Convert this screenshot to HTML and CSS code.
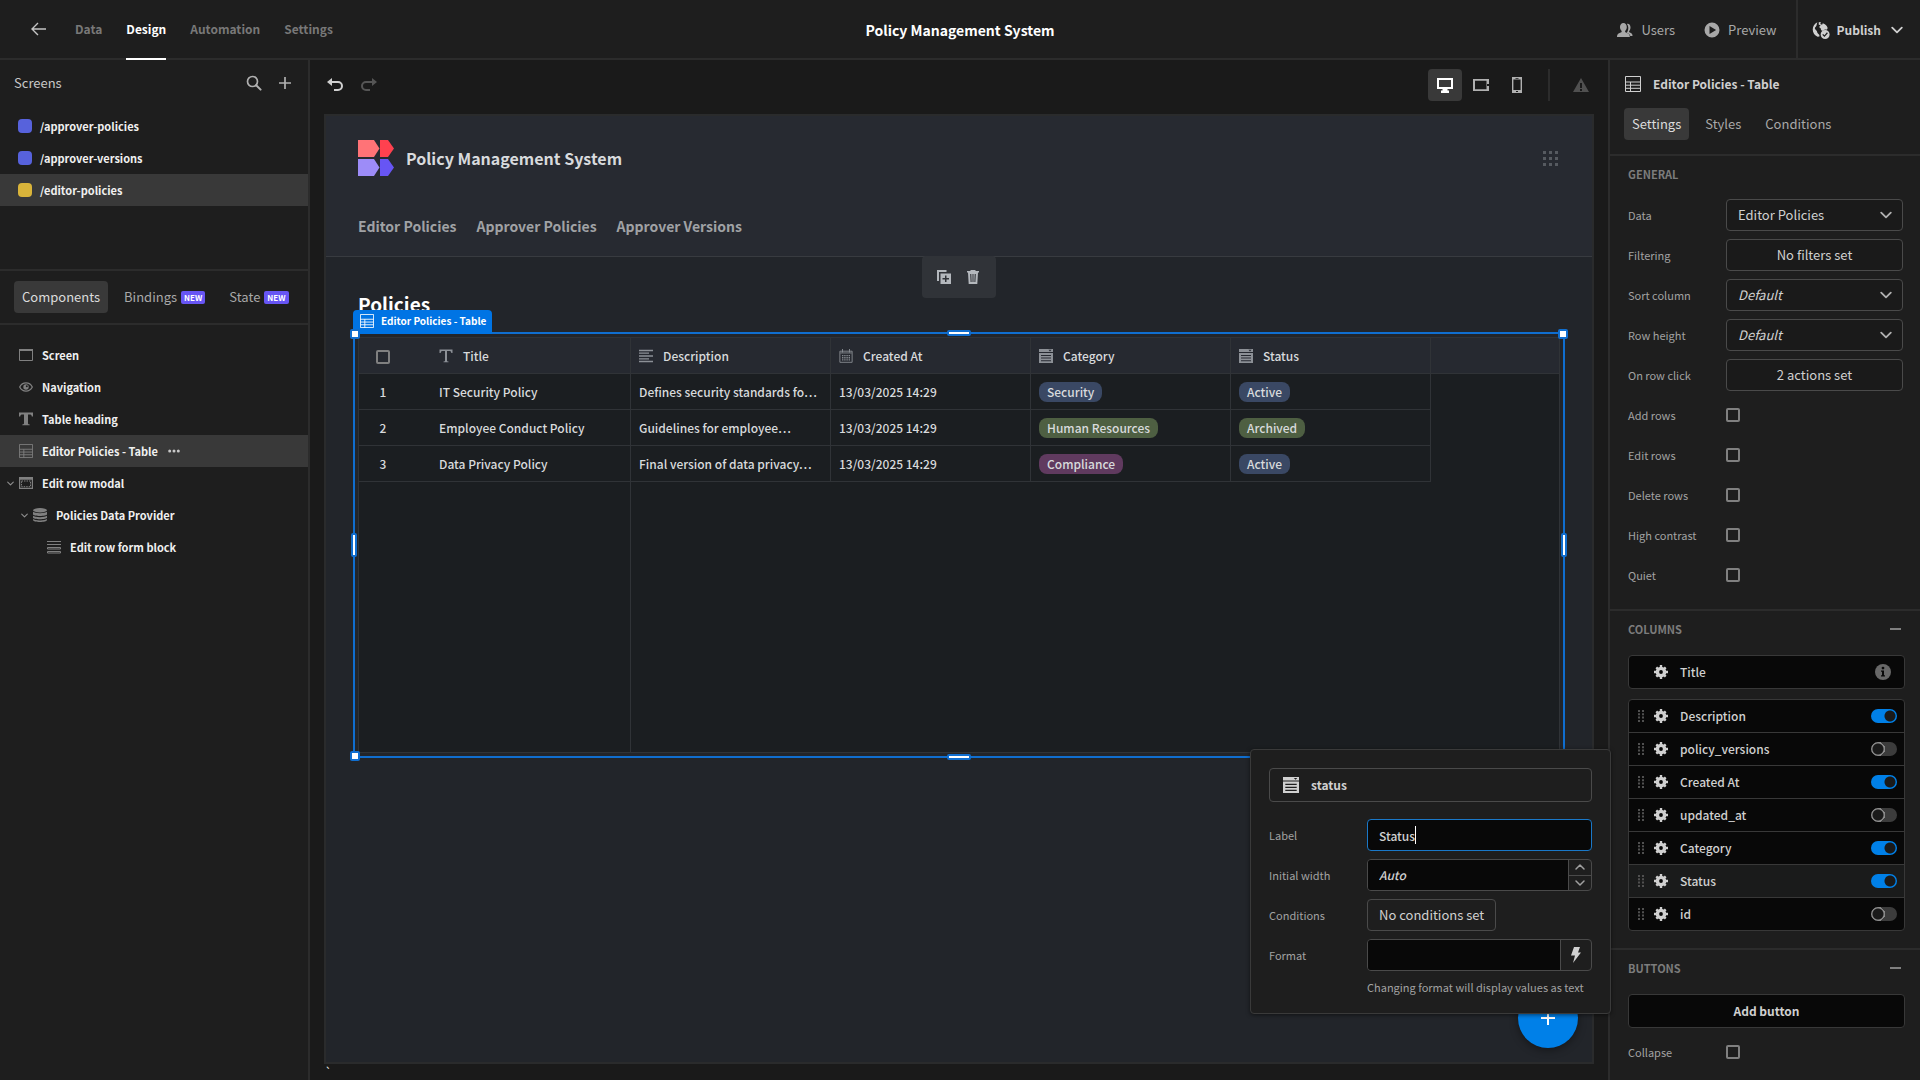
FILE: index.html
```html
<!DOCTYPE html>
<html lang="en">
<head>
  <meta charset="UTF-8" />
  <meta name="viewport" content="width=device-width, initial-scale=1.0"/>
  <title>Policy Management System</title>
  <link rel="stylesheet" href="styles.css">
</head>
<body>
  <svg class="sprite" aria-hidden="true">
    <symbol id="i-back" viewBox="0 0 18 18"><path d="M16 9H2M8 3L2 9l6 6" fill="none" stroke="currentColor" stroke-width="1.4"/></symbol>
    <symbol id="i-users" viewBox="0 0 18 18"><path d="M16.5 15h-2.2c-.5-1.600-1.800-2.600-3.500-3.200.9-1.200 1.500-2.900 1.500-4.700 0-1.700-.5-3.200-1.500-4.200 2.300-.5 3.700 1.100 3.700 3.500 0 1.500-.6 2.800-1.300 3.600-.3.700 0 1.100.6 1.400 1.700.6 2.900 1.800 2.700 3.600z"/><path d="M9.400 11.200c-.4-.2-.5-1 .1-1.600.8-.9 1.300-2.100 1.300-3.500C10.800 3.700 9.500 2 7.400 2S4 3.700 4 6.100c0 1.400.5 2.600 1.300 3.500.6.6.5 1.400.1 1.600C2.600 12 1 13.100 1 15.500V16h12.800v-.5c0-2.400-1.600-3.500-4.400-4.300z"/></symbol>
    <symbol id="i-play" viewBox="0 0 18 18"><path fill-rule="evenodd" d="M9 1.500a7.500 7.500 0 100 15 7.500 7.500 0 000-15zM6.500 5v8l6.600-4z"/></symbol>
    <symbol id="i-publish" viewBox="0 0 20 20"><path d="M6 1.500C2.800 3 .8 6 .8 9.400c0 3.600 2.200 6.700 5.400 8l2-.2c.5-1.600-.4-2.400-1.600-3.400-1.200-1-.6-2.600-2-3.600C3 9.100 2.600 7.400 4.200 6.400 5.600 5.400 5 3.400 6 1.500zM7.600 1l2.600.8-1.200 1.400 2.200 1 .8-1.600c2.600.8 4.600 2.600 5.400 5.200l-.8 2c-1.400-.6-3.200-.2-4.400 1.200l-2-.8-.6-2.200-1.800-1.200L9.600 5 7.400 4z"/><path fill-rule="evenodd" d="M14.600 10a5 5 0 100 10 5 5 0 000-10zm-.8 7.800l-2.400-2.400 1-1 1.400 1.300 2.800-3.100 1 .9z"/></symbol>
    <symbol id="i-chev" viewBox="0 0 10 10"><path d="M1 3l4 4 4-4" fill="none" stroke="currentColor" stroke-width="1.500" stroke-linecap="round" stroke-linejoin="round"/></symbol>
    <symbol id="i-search" viewBox="0 0 16 16"><circle cx="6.500" cy="6.500" r="5" fill="none" stroke="currentColor" stroke-width="1.700"/><path d="M10.200 10.200L14.600 14.600" stroke="currentColor" stroke-width="2" stroke-linecap="round"/></symbol>
    <symbol id="i-plus" viewBox="0 0 12 12"><path d="M6 0v12M0 6h12" stroke="currentColor" stroke-width="1.700"/></symbol>
    <symbol id="i-undo" viewBox="0 0 18 18"><path d="M3 6h9a4 4 0 010 8H8" fill="none" stroke="currentColor" stroke-width="2"/><path d="M1 6l5-4v8z"/></symbol>
    <symbol id="i-desktop" viewBox="0 0 18 18"><path fill-rule="evenodd" d="M1 2h16v11h-5.500v1.500H13V17H5v-2.500h1.500V13H1zm2 2v7h12V4z"/></symbol>
    <symbol id="i-tablet" viewBox="0 0 18 18"><path fill-rule="evenodd" d="M1 3h16v12H1zm2 1.700v8.600h11.500V4.700z"/><path d="M15 8h2v2h-2z" fill="#1a1a1a"/></symbol>
    <symbol id="i-phone" viewBox="0 0 18 18"><path fill-rule="evenodd" d="M4 1h10v16H4zm1.400 2.500v10.600h7.200V3.500z"/><path d="M7.500 2h3v.8h-3zM8 15h2v1H8z" fill="#1a1a1a"/></symbol>
    <symbol id="i-alert" viewBox="0 0 18 18"><path fill-rule="evenodd" d="M9 2L1 16h16zM8 7h2v5H8zm0 6h2v2H8z"/></symbol>
    <symbol id="i-table" viewBox="0 0 16 16"><path d="M.5 .5h15v15H.5zM.5 6h15M.5 9.200h15M.5 12.300h15M5.500 6v9.500" fill="none" stroke="currentColor"/></symbol>
    <symbol id="i-screen" viewBox="0 0 14 14"><path d="M.5 1.500h13v11H.5z" fill="none" stroke="currentColor"/><path d="M0 1h14v2H0z"/></symbol>
    <symbol id="i-eye" viewBox="0 0 14 14"><path d="M.7 7C3.500 1.500 10.500 1.500 13.300 7 10.500 12.500 3.500 12.500 .7 7z" fill="none" stroke="currentColor" stroke-width="1.300"/><circle cx="7" cy="7" r="2.700"/><circle cx="7.800" cy="6.200" r="1" fill="#1e1e1e"/></symbol>
    <symbol id="i-text" viewBox="0 0 14 14"><path d="M0 .5h14v4h-1.200c-.2-1.500-.8-2-2.300-2H9v8.700c0 .9.400 1.100 1.700 1.200v.9H3.300v-.9C4.600 12.300 5 12.100 5 11.200V2.500H3.500C2 2.500 1.400 3 1.200 4.500H0z"/></symbol>
    <symbol id="i-textlight" viewBox="0 0 14 14"><path d="M.5 .5h13V4h-1.200c-.2-1.400-.7-1.900-2-1.900H8v9.400c0 .7.400.9 1.500 1v.8h-5v-.8c1.100-.1 1.500-.3 1.500-1V2.100H3.700c-1.300 0-1.800.5-2 1.900H.5z"/></symbol>
    <symbol id="i-modal" viewBox="0 0 14 14"><path fill-rule="evenodd" d="M0 1h14v12H0zm1.200 2.700v8.100h11.600V3.700z"/><path d="M2.500 5h9v5.700h-9z" fill="none" stroke="currentColor" stroke-dasharray="1.500 1"/></symbol>
    <symbol id="i-data" viewBox="0 0 14 14"><ellipse cx="7" cy="2.200" rx="7" ry="2.200"/><path d="M0 3.700c1.500 1.900 12.500 1.900 14 0v2.500c0 2.300-14 2.300-14 0zM0 7.700c1.500 1.900 12.500 1.900 14 0V9.500c0 2.300-14 2.300-14 0zM0 11c1.500 1.900 12.500 1.900 14 0v1c0 2.600-14 2.600-14 0z"/></symbol>
    <symbol id="i-form" viewBox="0 0 14 14"><path d="M0 1.500h14M0 4.500h14M.5 7.500h13v1.500H.5zM.5 11.500h13v1.500H.5z" fill="none" stroke="currentColor"/></symbol>
    <symbol id="i-dots" viewBox="0 0 12 4"><circle cx="1.700" cy="2" r="1.500"/><circle cx="6" cy="2" r="1.500"/><circle cx="10.300" cy="2" r="1.500"/></symbol>
    <symbol id="i-grid" viewBox="0 0 15 15"><path d="M0 0h3v3H0zM6 0h3v3H6zM12 0h3v3h-3zM0 6h3v3H0zM6 6h3v3H6zM12 6h3v3h-3zM0 12h3v3H0zM6 12h3v3H6zM12 12h3v3h-3z"/></symbol>
    <symbol id="i-copy" viewBox="0 0 14 14"><path d="M0 0h9.500v2H2v9H0z"/><path fill-rule="evenodd" d="M3.500 3.500H14V14H3.500zM8 5.500V8H5.500v1.500H8V12h1.500V9.500H12V8H9.500V5.500z"/></symbol>
    <symbol id="i-trash" viewBox="0 0 14 14"><path fill-rule="evenodd" d="M4.500 1V0h5v1H13v1.500h-1L11.300 14H2.700L2 2.500H1V1zM4.200 4l.4 8h1l-.3-8zm2.300 0v8h1V4zm2.200 0l-.3 8h1l.4-8z"/></symbol>
    <symbol id="i-lines" viewBox="0 0 14 14"><path d="M0 1.500h14M0 4.200h10M0 7h14M0 9.800h10M0 12.500h14" stroke="currentColor" stroke-width="1.300"/></symbol>
    <symbol id="i-cal" viewBox="0 0 16 16"><path d="M1 2.500h14v12.700H1zM4 0v4M12 0v4M1.500 4.500h13" fill="none" stroke="currentColor"/><path d="M3.500 7.500h9.500M3.500 10h9.500M3.500 12.500h9.500" stroke="currentColor" stroke-width="1.500" stroke-dasharray="1.500 1"/></symbol>
    <symbol id="i-options" viewBox="0 0 14 14"><path fill-rule="evenodd" d="M0 0h14v3H0zM9.500 .8h3L11 2.400zM0 4h14v10H0zM2 6v1h10V6zm0 2.600v1h10v-1zm0 2.600v1h10v-1z"/></symbol>
    <symbol id="i-gear" viewBox="-7 -7 14 14"><path d="M0-7V7M-7 0H7M-4.700-4.700L4.700 4.700M4.700-4.700L-4.700 4.700" stroke="currentColor" stroke-width="2.400"/><circle r="3.700" fill="none" stroke="currentColor" stroke-width="3.200"/><circle r="1.900" fill="#080808"/></symbol>
    <symbol id="i-info" viewBox="0 0 16 16"><circle cx="8" cy="8" r="8"/><path d="M8 2.700a1.400 1.400 0 100 2.800 1.400 1.400 0 000-2.800zM6 6.500h3v4.700h1v1.300H6v-1.300h1V7.800H6z" fill="#080808"/></symbol>
    <symbol id="i-drag" viewBox="0 0 6 12"><path d="M0 0h2v2H0zM4 0h2v2H4zM0 3.300h2v2H0zM4 3.300h2v2H4zM0 6.600h2v2H0zM4 6.600h2v2H4zM0 9.900h2v2H0zM4 9.900h2v2H4z"/></symbol>
    <symbol id="i-bolt" viewBox="0 0 10 16"><path d="M3 0h6L7 5.500h3L2 16l2-7.500H0z"/></symbol>
  </svg>

  <header class="topbar">
    <nav class="topnav">
      <a href="#" class="back" aria-label="Back"><svg class="i18"><use href="#i-back"/></svg></a>
      <a href="#">Data</a>
      <a href="#" class="active">Design</a>
      <a href="#">Automation</a>
      <a href="#">Settings</a>
    </nav>
    <h1>Policy Management System</h1>
    <div class="top-actions">
      <button><svg class="i18"><use href="#i-users"/></svg>Users</button>
      <button><svg class="i18"><use href="#i-play"/></svg>Preview</button>
      <button class="publish"><svg class="i18"><use href="#i-publish"/></svg>Publish<svg class="i12"><use href="#i-chev"/></svg></button>
    </div>
  </header>

  <main class="workspace">
    <aside class="left">
      <section class="screens">
        <div class="screens-head">
          <h2>Screens</h2>
          <button aria-label="Search"><svg class="i16"><use href="#i-search"/></svg></button>
          <button aria-label="Add screen"><svg class="i12"><use href="#i-plus"/></svg></button>
        </div>
        <ul class="tree">
          <li><span class="swatch"></span>/approver-policies</li>
          <li><span class="swatch"></span>/approver-versions</li>
          <li class="selected"><span class="swatch yellow"></span>/editor-policies</li>
        </ul>
      </section>
      <div class="tabs left-tabs">
        <button class="active">Components</button>
        <button>Bindings<span class="new">NEW</span></button>
        <button>State<span class="new">NEW</span></button>
      </div>
      <ul class="tree components">
        <li><span class="twist"></span><svg class="i14"><use href="#i-screen"/></svg>Screen</li>
        <li><span class="twist"></span><svg class="i14"><use href="#i-eye"/></svg>Navigation</li>
        <li><span class="twist"></span><svg class="i14"><use href="#i-text"/></svg>Table heading</li>
        <li class="selected"><span class="twist"></span><svg class="i14"><use href="#i-table"/></svg>Editor Policies - Table<svg class="more"><use href="#i-dots"/></svg></li>
        <li><svg class="twist"><use href="#i-chev"/></svg><svg class="i14"><use href="#i-modal"/></svg>Edit row modal</li>
        <li class="level-1"><svg class="twist"><use href="#i-chev"/></svg><svg class="i14"><use href="#i-data"/></svg>Policies Data Provider</li>
        <li class="level-2"><span class="twist"></span><svg class="i14"><use href="#i-form"/></svg>Edit row form block</li>
      </ul>
    </aside>

    <section class="canvas">
      <div class="canvas-bar">
        <button aria-label="Undo"><svg class="i18"><use href="#i-undo"/></svg></button>
        <button class="redo" aria-label="Redo" disabled><svg class="i18"><use href="#i-undo"/></svg></button>
        <div class="devices">
          <button class="active" aria-label="Desktop"><svg class="i18"><use href="#i-desktop"/></svg></button>
          <button aria-label="Tablet"><svg class="i18"><use href="#i-tablet"/></svg></button>
          <button aria-label="Mobile"><svg class="i18"><use href="#i-phone"/></svg></button>
        </div>
        <button class="alert" aria-label="Errors"><svg class="i18"><use href="#i-alert"/></svg></button>
      </div>

      <div class="frame">
        <header class="app-head">
          <div class="brand">
            <svg class="logo" viewBox="0 0 36 36"><path d="M0 0h16l5.500 8.500L16 17H0z" fill="#ff7377"/><path d="M22 0h8l6 8.500-6 8.500h-8z" fill="#ff414f"/><path d="M0 19h16l5.500 8.500L16 36H0z" fill="#9d8cf8"/><path d="M22 19h8l6 8.500-6 8.500h-8z" fill="#6755f4"/></svg>
            <span>Policy Management System</span>
            <svg class="apps"><use href="#i-grid"/></svg>
          </div>
          <nav class="app-nav">
            <a href="#">Editor Policies</a>
            <a href="#">Approver Policies</a>
            <a href="#">Approver Versions</a>
          </nav>
        </header>
        <div class="float-bar">
          <button aria-label="Duplicate"><svg class="i14"><use href="#i-copy"/></svg></button>
          <button aria-label="Delete"><svg class="i14"><use href="#i-trash"/></svg></button>
        </div>
        <div class="app-body">
          <h2>Policies</h2>
          <div class="grid-wrap">
            <div class="grid">
              <table>
                <colgroup><col class="c-num"><col class="c-title"><col class="c-data"><col class="c-data"><col class="c-data"><col class="c-data"><col></colgroup>
                <thead>
                  <tr>
                    <th class="num"><input type="checkbox" aria-label="Select all rows"></th>
                    <th class="line"><span><svg class="i14"><use href="#i-textlight"/></svg>Title</span></th>
                    <th class="line"><span><svg class="i14"><use href="#i-lines"/></svg>Description</span></th>
                    <th class="line"><span><svg class="i14"><use href="#i-cal"/></svg>Created At</span></th>
                    <th class="line"><span><svg class="i14"><use href="#i-options"/></svg>Category</span></th>
                    <th class="line"><span><svg class="i14"><use href="#i-options"/></svg>Status</span></th>
                    <th></th>
                  </tr>
                </thead>
                <tbody>
                  <tr>
                    <td class="num">1</td>
                    <td class="line">IT Security Policy</td>
                    <td class="line">Defines security standards fo…</td>
                    <td class="line">13/03/2025 14:29</td>
                    <td class="line"><span class="pill blue">Security</span></td>
                    <td class="line"><span class="pill blue">Active</span></td>
                    <td class="blank"></td>
                  </tr>
                  <tr>
                    <td class="num">2</td>
                    <td class="line">Employee Conduct Policy</td>
                    <td class="line">Guidelines for employee…</td>
                    <td class="line">13/03/2025 14:29</td>
                    <td class="line"><span class="pill green">Human Resources</span></td>
                    <td class="line"><span class="pill green">Archived</span></td>
                    <td class="blank"></td>
                  </tr>
                  <tr>
                    <td class="num">3</td>
                    <td class="line">Data Privacy Policy</td>
                    <td class="line">Final version of data privacy…</td>
                    <td class="line">13/03/2025 14:29</td>
                    <td class="line"><span class="pill purple">Compliance</span></td>
                    <td class="line"><span class="pill blue">Active</span></td>
                    <td class="blank"></td>
                  </tr>
                </tbody>
              </table>
              <div class="grid-rest"></div>
            </div>
            <!-- selection outline with resize handles -->
            <div class="selection">
              <div class="tag"><svg class="i14"><use href="#i-table"/></svg>Editor Policies - Table</div>
              <i class="corner tl"></i><i class="corner tr"></i><i class="corner bl"></i>
              <i class="bar top"></i><i class="bar bottom"></i><i class="side lft"></i><i class="side rgt"></i>
            </div>
          </div>
        </div>
        <button class="fab" aria-label="Add component"><svg class="i14"><use href="#i-plus"/></svg></button>
      </div>
      <div class="canvas-foot">`</div>

      <form class="popover">
        <div class="pop-head"><svg class="i16"><use href="#i-options"/></svg>status</div>
        <div class="row">
          <label for="p-label">Label</label>
          <div class="text-wrap"><input id="p-label" class="field focus" type="text" value="Status"><span class="caret"></span></div>
        </div>
        <div class="row">
          <label for="p-width">Initial width</label>
          <div class="group">
            <input id="p-width" type="text" placeholder="Auto">
            <div class="stepper">
              <button type="button" aria-label="Increase"><svg class="i12 flip"><use href="#i-chev"/></svg></button>
              <button type="button" aria-label="Decrease"><svg class="i12"><use href="#i-chev"/></svg></button>
            </div>
          </div>
        </div>
        <div class="row">
          <label for="p-cond">Conditions</label>
          <button type="button" id="p-cond" class="field fit">No conditions set</button>
        </div>
        <div class="row">
          <label for="p-format">Format</label>
          <div class="group">
            <input id="p-format" type="text">
            <button type="button" class="bolt" aria-label="Bindings"><svg><use href="#i-bolt"/></svg></button>
          </div>
        </div>
        <p class="hint">Changing format will display values as text</p>
      </form>
    </section>

    <aside class="right">
      <div class="right-head"><svg class="i16"><use href="#i-table"/></svg>Editor Policies - Table</div>
      <div class="tabs right-tabs">
        <button class="active">Settings</button>
        <button>Styles</button>
        <button>Conditions</button>
      </div>
      <section class="general">
        <h3>GENERAL</h3>
        <div class="row">
          <label for="s-data">Data</label>
          <div class="select"><select id="s-data" class="field"><option>Editor Policies</option></select><svg class="i12"><use href="#i-chev"/></svg></div>
        </div>
        <div class="row"><label for="s-filter">Filtering</label><button id="s-filter" class="field">No filters set</button></div>
        <div class="row">
          <label for="s-sort">Sort column</label>
          <div class="select"><select id="s-sort" class="field unset"><option>Default</option></select><svg class="i12"><use href="#i-chev"/></svg></div>
        </div>
        <div class="row">
          <label for="s-height">Row height</label>
          <div class="select"><select id="s-height" class="field unset"><option>Default</option></select><svg class="i12"><use href="#i-chev"/></svg></div>
        </div>
        <div class="row"><label for="s-click">On row click</label><button id="s-click" class="field">2 actions set</button></div>
        <div class="row"><label for="s-add">Add rows</label><input id="s-add" type="checkbox"></div>
        <div class="row"><label for="s-edit">Edit rows</label><input id="s-edit" type="checkbox"></div>
        <div class="row"><label for="s-del">Delete rows</label><input id="s-del" type="checkbox"></div>
        <div class="row"><label for="s-contrast">High contrast</label><input id="s-contrast" type="checkbox"></div>
        <div class="row"><label for="s-quiet">Quiet</label><input id="s-quiet" type="checkbox"></div>
      </section>
      <section class="columns">
        <h3>COLUMNS</h3>
        <ul class="cols primary">
          <li><span class="drag"></span><button aria-label="Edit Title"><svg class="i14"><use href="#i-gear"/></svg></button><span class="col-name">Title</span><svg class="i16 info"><use href="#i-info"/></svg></li>
        </ul>
        <ul class="cols">
          <li><svg class="drag"><use href="#i-drag"/></svg><button aria-label="Edit Description"><svg class="i14"><use href="#i-gear"/></svg></button><label class="col-name" for="t1">Description</label><input id="t1" class="switch" type="checkbox" checked></li>
          <li><svg class="drag"><use href="#i-drag"/></svg><button aria-label="Edit policy_versions"><svg class="i14"><use href="#i-gear"/></svg></button><label class="col-name" for="t2">policy_versions</label><input id="t2" class="switch" type="checkbox"></li>
          <li><svg class="drag"><use href="#i-drag"/></svg><button aria-label="Edit Created At"><svg class="i14"><use href="#i-gear"/></svg></button><label class="col-name" for="t3">Created At</label><input id="t3" class="switch" type="checkbox" checked></li>
          <li><svg class="drag"><use href="#i-drag"/></svg><button aria-label="Edit updated_at"><svg class="i14"><use href="#i-gear"/></svg></button><label class="col-name" for="t4">updated_at</label><input id="t4" class="switch" type="checkbox"></li>
          <li><svg class="drag"><use href="#i-drag"/></svg><button aria-label="Edit Category"><svg class="i14"><use href="#i-gear"/></svg></button><label class="col-name" for="t5">Category</label><input id="t5" class="switch" type="checkbox" checked></li>
          <li class="open"><svg class="drag"><use href="#i-drag"/></svg><button aria-label="Edit Status"><svg class="i14"><use href="#i-gear"/></svg></button><label class="col-name" for="t6">Status</label><input id="t6" class="switch" type="checkbox" checked></li>
          <li><svg class="drag"><use href="#i-drag"/></svg><button aria-label="Edit id"><svg class="i14"><use href="#i-gear"/></svg></button><label class="col-name" for="t7">id</label><input id="t7" class="switch" type="checkbox"></li>
        </ul>
      </section>
      <section class="buttons">
        <h3>BUTTONS</h3>
        <button class="add-button">Add button</button>
        <div class="row"><label for="s-collapse">Collapse</label><input id="s-collapse" type="checkbox"></div>
      </section>
    </aside>
  </main>
</body>
</html>
```
FILE: styles.css
```css
* {
  box-sizing: border-box;
  margin: 0;
  padding: 0;
}

:root {
  --bg: #1e1e1e;
  --bg-dark: #1a1a1a;
  --line: #2c2c2c;
  --hover: #393939;
  --edge: #4a4a4a;
  --text: #d0d0d0;
  --muted: #a2a2a2;
}

body {
  display: flex;
  flex-direction: column;
  height: 100vh;
  overflow: hidden;
  background: var(--bg);
  color: var(--text);
  font-family: "Noto Sans CJK SC", "Noto Sans", sans-serif;
  font-size: 13px;
  line-height: 18px;
}

button, input, select {
  font: inherit;
  color: inherit;
  background: none;
  border: none;
}

button {
  display: flex;
  align-items: center;
  justify-content: center;
  cursor: pointer;
}

a {
  color: inherit;
  text-decoration: none;
}

ul {
  list-style: none;
}

svg {
  display: block;
  flex: none;
  fill: currentColor;
}

.sprite {
  position: absolute;
  width: 0;
  height: 0;
}

.i12 { width: 12px; height: 12px; }
.i14 { width: 14px; height: 14px; }
.i16 { width: 16px; height: 16px; }
.i18 { width: 18px; height: 18px; }

/* top bar */

.topbar {
  flex: none;
  display: grid;
  grid-template-columns: 1fr auto 1fr;
  height: 60px;
  border-bottom: 2px solid var(--line);
}

.topbar h1 {
  align-self: center;
  font-size: 14px;
  font-weight: 700;
  color: #fff;
}

.topnav {
  display: flex;
  gap: 24px;
  padding-left: 30px;
  font-size: 12px;
  font-weight: 700;
  color: #787878;
}

.topnav a {
  display: flex;
  align-items: center;
  height: 60px;
  padding-bottom: 2px;
}

.topnav .back {
  margin-right: 3px;
  color: #c4c4c4;
}

.topnav .active {
  padding-bottom: 0;
  border-bottom: 2px solid #fff;
  color: #fff;
}

.top-actions {
  display: flex;
  justify-content: flex-end;
  gap: 28px;
  color: #a8a8a8;
}

.top-actions button {
  gap: 7px;
}

.top-actions .publish {
  padding: 0 17px 0 14px;
  margin-left: -9px;
  border-left: 2px solid var(--line);
  color: var(--text);
  font-size: 12px;
  font-weight: 700;
}

.publish .i12 {
  margin-left: 3px;
}

/* workspace */

.workspace {
  flex: 1;
  min-height: 0;
  display: grid;
  grid-template-columns: 310px minmax(0, 1fr) 312px;
}

.left {
  border-right: 2px solid var(--line);
}

.screens {
  height: 211px;
  border-bottom: 2px solid var(--line);
}

.screens-head {
  display: flex;
  align-items: center;
  gap: 17px;
  height: 50px;
  padding: 0 17px 4px 14px;
  color: #b0b0b0;
}

.screens-head h2 {
  flex: 1;
  font-size: 13px;
  font-weight: 400;
  color: #c8c8c8;
}

.tree li {
  display: flex;
  align-items: center;
  height: 32px;
  color: #f0f0f0;
  font-size: 11px;
  font-weight: 700;
}

.tree .selected {
  background: var(--hover);
}

.swatch {
  width: 14px;
  height: 14px;
  margin: 0 8px 0 18px;
  border-radius: 4px;
  background: #5762dc;
}

.swatch.yellow {
  background: #d9b43a;
}

.tabs {
  display: flex;
  align-items: center;
  gap: 8px;
  color: #a8a8a8;
}

.tabs button {
  height: 32px;
  padding: 0 8px;
  border-radius: 4px;
}

.tabs .active {
  background: var(--hover);
  color: #dcdcdc;
}

.left-tabs {
  height: 54px;
  padding-left: 14px;
  border-bottom: 2px solid var(--line);
}

.new {
  margin-left: 4px;
  padding: 0 3px;
  border-radius: 2px;
  background: #6755f4;
  color: #fff;
  font-size: 8px;
  font-weight: 700;
  line-height: 13px;
}

.components {
  padding-top: 14px;
}

.components .i14 {
  margin-right: 9px;
  color: #808080;
}

.components .level-1 { padding-left: 14px; }
.components .level-2 { padding-left: 28px; }

.twist {
  width: 7px;
  height: 7px;
  margin: 0 5px 0 7px;
  color: #909090;
}

.more {
  width: 12px;
  height: 4px;
  margin-left: 10px;
  color: #c8c8c8;
}

/* canvas */

.canvas {
  position: relative;
  display: flex;
  flex-direction: column;
  padding: 0 14px;
  background: var(--bg-dark);
}

.canvas-bar {
  flex: none;
  display: flex;
  align-items: center;
  gap: 16px;
  height: 54px;
  padding: 0 4px 4px 2px;
}

.redo {
  color: #555;
  transform: scaleX(-1);
}

.devices {
  display: flex;
  gap: 2px;
  margin-left: auto;
  padding-right: 14px;
  border-right: 2px solid var(--line);
  color: #b0b0b0;
}

.devices button {
  width: 34px;
  height: 32px;
  border-radius: 4px;
}

.devices .active {
  background: var(--hover);
  color: #fff;
}

.alert {
  margin-left: 6px;
  color: #505050;
}

.frame {
  position: relative;
  flex: 1;
  min-height: 0;
  border: 2px solid #2a2b2c;
  background: #22252a;
}

.canvas-foot {
  height: 16px;
  padding-left: 1px;
  font-size: 11px;
  line-height: 14px;
  color: #fff;
}

.app-head {
  padding: 24px 32px 0;
  height: 141px;
  background: #272a31;
  border-bottom: 1px solid #383b40;
}

.brand {
  display: flex;
  align-items: center;
  gap: 12px;
  font-size: 16px;
  font-weight: 700;
  color: #d8dadd;
}

.logo {
  width: 36px;
  height: 36px;
}

.apps {
  width: 15px;
  height: 15px;
  margin: 0 2px 0 auto;
  color: #565a60;
}

.app-nav {
  display: flex;
  gap: 20px;
  padding-top: 38px;
  font-size: 14px;
  font-weight: 700;
  line-height: 24px;
  color: #a0a2a5;
}

.float-bar {
  position: absolute;
  top: 140px;
  left: 50%;
  display: flex;
  gap: 15px;
  margin-left: -37px;
  padding: 14px 16px 14px 15px;
  border-radius: 4px;
  background: #303338;
  color: #b4b8bd;
}

.app-body {
  padding: 32px 32px 0;
}

.app-body h2 {
  font-size: 19px;
  font-weight: 700;
  line-height: 30px;
  color: #fff;
}

.grid-wrap {
  position: relative;
  margin-top: 18px;
}

.grid {
  display: flex;
  flex-direction: column;
  min-height: 416px;
  border: 1px solid #303337;
  background: #1b1e21;
}

.grid table {
  width: 100%;
  table-layout: fixed;
  border-collapse: separate;
  border-spacing: 0;
  color: #d8dadc;
  font-size: 12px;
}

.c-num { width: 72px; }
.c-title { width: 200px; }
.c-data { width: 200px; }

.grid th, .grid td {
  height: 36px;
  padding: 0 8px;
  border-bottom: 1px solid #303337;
  font-weight: 500;
  text-align: left;
  white-space: nowrap;
}

.grid th {
  background: #262930;
}

.grid th span {
  display: flex;
  align-items: center;
  gap: 10px;
}

.grid th svg {
  color: #8c9096;
}

.grid .line {
  border-right: 1px solid #303337;
}

.grid .num {
  width: 72px;
  padding: 0 24px 0 0;
  text-align: center;
}

.grid .blank {
  border: none;
}

.grid-rest {
  flex: 1;
  width: 272px;
  border-right: 1px solid #303337;
}

.pill {
  display: inline-block;
  padding: 0 8px;
  border-radius: 8px;
  line-height: 20px;
}

.pill.blue { background: #3a4864; }
.pill.green { background: #4e5f42; }
.pill.purple { background: #603a5f; }

.selection {
  position: absolute;
  inset: -5px;
  border: 2px solid #106ecf;
  pointer-events: none;
}

.tag {
  position: absolute;
  bottom: 100%;
  left: -2px;
  display: flex;
  align-items: center;
  gap: 7px;
  height: 24px;
  padding: 0 6px 2px 7px;
  border-radius: 4px 4px 0 0;
  background: #0074e4;
  color: #fff;
  font-size: 10px;
  font-weight: 700;
  white-space: nowrap;
}

.corner, .bar, .side {
  position: absolute;
  background: #fff;
  border: 2px solid #106ecf;
  border-radius: 2px;
}

.corner { width: 10px; height: 10px; }
.bar { left: 50%; width: 24px; height: 6px; margin-left: -12px; }
.side { top: 50%; width: 6px; height: 24px; margin-top: -12px; }
.tl { top: -5px; left: -5px; }
.tr { top: -5px; right: -5px; }
.bl { bottom: -5px; left: -5px; }
.top { top: -4px; }
.bottom { bottom: -4px; }
.lft { left: -4px; }
.rgt { right: -4px; }

.fab {
  position: absolute;
  right: 14px;
  bottom: 14px;
  width: 60px;
  height: 60px;
  border-radius: 50%;
  background: #0080e8;
  box-shadow: 0 2px 8px #0006;
  color: #fff;
}

/* column popover */

.popover {
  position: absolute;
  right: -3px;
  bottom: 66px;
  z-index: 2;
  width: 361px;
  padding: 18px;
  border: 1px solid #3a3a3a;
  border-radius: 4px;
  background: var(--bg);
  box-shadow: 0 1px 4px #0008;
}

.pop-head {
  display: flex;
  align-items: center;
  gap: 12px;
  height: 34px;
  margin-bottom: 17px;
  padding: 0 13px;
  border: 1px solid var(--edge);
  border-radius: 4px;
  font-size: 12px;
  font-weight: 700;
}

.row {
  display: grid;
  grid-template-columns: 98px minmax(0, 1fr);
  align-items: center;
  height: 32px;
  margin-bottom: 8px;
}

.row label {
  font-size: 11px;
  color: var(--muted);
}

.field {
  width: 100%;
  height: 32px;
  padding: 0 11px;
  border: 1px solid var(--edge);
  border-radius: 4px;
  background: var(--bg-dark);
}

.field.fit {
  width: fit-content;
  background: none;
}

.text-wrap {
  position: relative;
}

.field.focus {
  border-color: #1a78c8;
  background: #080808;
  font-size: 12px;
  font-weight: 500;
  outline: none;
}

.caret {
  position: absolute;
  top: 7px;
  left: 48px;
  width: 1px;
  height: 18px;
  background: #fff;
}

.group {
  display: flex;
  height: 32px;
  border: 1px solid var(--edge);
  border-radius: 4px;
  overflow: hidden;
}

.group input {
  flex: 1;
  min-width: 0;
  padding: 0 11px;
  background: #080808;
}

.group input::placeholder {
  color: var(--text);
  font-size: 12px;
  font-style: italic;
  font-weight: 500;
}

.stepper {
  display: flex;
  flex-direction: column;
  width: 23px;
  border-left: 1px solid var(--edge);
  color: #a0a0a0;
}

.stepper button {
  flex: 1;
}

.stepper button + button {
  border-top: 1px solid var(--edge);
}

.stepper svg {
  height: 10px;
}

.flip {
  transform: scaleY(-1);
}

.bolt {
  width: 31px;
  border-left: 1px solid var(--edge);
}

.bolt svg {
  width: 10px;
  height: 16px;
}

.hint {
  margin-left: 98px;
  font-size: 11px;
  line-height: 16px;
  color: var(--muted);
}

/* settings panel */

.right {
  border-left: 2px solid var(--line);
  overflow: hidden;
}

.right-head {
  display: flex;
  align-items: center;
  gap: 12px;
  height: 48px;
  padding-left: 15px;
  font-size: 12px;
  font-weight: 700;
}

.right-tabs {
  height: 48px;
  padding: 0 14px 14px;
  border-bottom: 2px solid var(--line);
}

.right section {
  padding: 9px 15px 0 18px;
  border-bottom: 2px solid var(--line);
}

.right h3 {
  display: flex;
  align-items: center;
  justify-content: space-between;
  font-size: 11px;
  font-weight: 700;
  color: #7c7c7c;
}

.right .general {
  height: 455px;
}

.general h3 {
  margin-bottom: 16px;
}

.general .row {
  padding-right: 2px;
}

.columns h3::after, .buttons h3::after {
  content: "";
  width: 11px;
  height: 2px;
  margin-right: 4px;
  background: #808080;
}

.right .columns {
  padding-bottom: 17px;
}

.right .buttons {
  border: none;
}

.select {
  display: grid;
  align-items: center;
}

.select > * {
  grid-area: 1 / 1;
}

.select svg {
  margin-right: 11px;
  justify-self: end;
  pointer-events: none;
  color: #b0b0b0;
}

.select select {
  appearance: none;
}

.unset {
  font-style: italic;
}

input[type="checkbox"] {
  appearance: none;
  width: 14px;
  height: 14px;
  border: 2px solid #808080;
  border-radius: 2px;
  vertical-align: middle;
}

.cols {
  border: 1px solid #383838;
  border-radius: 4px;
  overflow: hidden;
  background: #080808;
}

.cols.primary {
  margin: 17px 0 10px;
}

.cols li {
  display: flex;
  align-items: center;
  height: 32px;
  padding: 0 7px 0 9px;
  font-size: 12px;
  font-weight: 500;
}

.cols li + li {
  height: 33px;
  border-top: 1px solid #383838;
}

.cols .open {
  background: #1a1b1b;
}

.drag {
  width: 6px;
  height: 12px;
  margin-right: 10px;
  color: #505050;
}

.cols .col-name {
  flex: 1;
  margin-left: 12px;
}

.info {
  margin-right: 6px;
  color: #686868;
}

.cols .switch {
  width: 26px;
  height: 14px;
  border: none;
  border-radius: 7px;
  background: radial-gradient(circle at 7px 7px, #1a1a1a 5px, #8a8a8a 6px, #8a8a8a 7px, #3c3c3c 7px);
}

.cols .switch:checked {
  background: radial-gradient(circle at 19px 7px, #1a1a1a 5px, #0080e8 6px);
}

.add-button {
  width: 100%;
  height: 34px;
  margin: 17px 0 8px;
  border: 1px solid #383838;
  border-radius: 4px;
  background: #080808;
  font-size: 12px;
  font-weight: 700;
}
```
